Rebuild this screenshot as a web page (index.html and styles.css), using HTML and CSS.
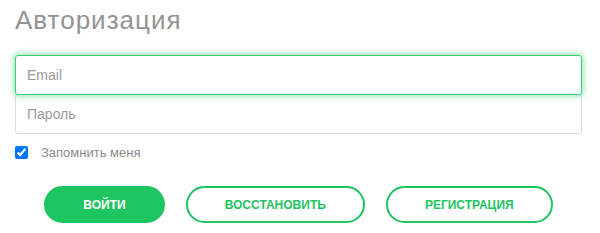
FILE: index.html
```html
<!DOCTYPE html>
<html>

<head>
    <title>Авторизация</title>
    <link rel="stylesheet" href="styles.css">
</head>

<body>
    <div class="auth">
        <h1 class="auth-title">Авторизация</h1>
        <div class="auth-fields">
            <input class="auth-input auth-input-focus" type="text" placeholder="Email" autofocus>
            <input class="auth-input" type="password" placeholder="Пароль">
        </div>
        <label class="auth-remember">
            <input class="auth-check" type="checkbox" checked>
            <span>Запомнить меня</span>
        </label>
        <div class="auth-buttons">
            <button class="auth-btn auth-btn-fill">Войти</button>
            <button class="auth-btn">Восстановить</button>
            <button class="auth-btn">Регистрация</button>
        </div>
    </div>
</body>

</html>
```

FILE: styles.css
```css
body {
    margin: 0;
    background-color: #fff;
    font-family: "Liberation Sans", Arial, sans-serif;
}

.auth {
    padding: 2px 18px 0 15px;
}

.auth-title {
    margin: 0 0 17px 0;
    font-size: 26px;
    line-height: 36px;
    font-weight: normal;
    letter-spacing: 1px;
    color: #939393;
}

.auth-fields {
    display: flex;
    flex-direction: column;
}

.auth-input {
    box-sizing: border-box;
    height: 40px;
    margin: 0;
    padding: 0 11px;
    border: 1px solid #dcdcdc;
    border-radius: 3px;
    font-family: inherit;
    font-size: 14px;
    color: #555;
    outline: none;
}

.auth-input + .auth-input {
    margin-top: -1px;
}

.auth-input::placeholder {
    color: #9a9a9a;
}

.auth-input-focus {
    position: relative;
    z-index: 1;
    border-color: #3ccf78;
    box-shadow: 0 0 6px 1px rgba(40, 200, 110, 0.55);
}

.auth-remember {
    display: flex;
    align-items: center;
    margin-top: 11px;
    font-size: 13px;
    color: #8a8a8a;
}

.auth-check {
    width: 13px;
    height: 13px;
    margin: 0 13px 0 0;
}

.auth-buttons {
    display: flex;
    justify-content: center;
    gap: 21px;
    margin-top: 26px;
}

.auth-btn {
    height: 37px;
    padding: 0 37px;
    border: 2px solid #1ec460;
    border-radius: 19px;
    background-color: #fff;
    color: #1ec460;
    font-family: inherit;
    font-size: 12px;
    font-weight: bold;
    text-transform: uppercase;
}

.auth-btn-fill {
    background-color: #1ec460;
    color: #fff;
}
```
